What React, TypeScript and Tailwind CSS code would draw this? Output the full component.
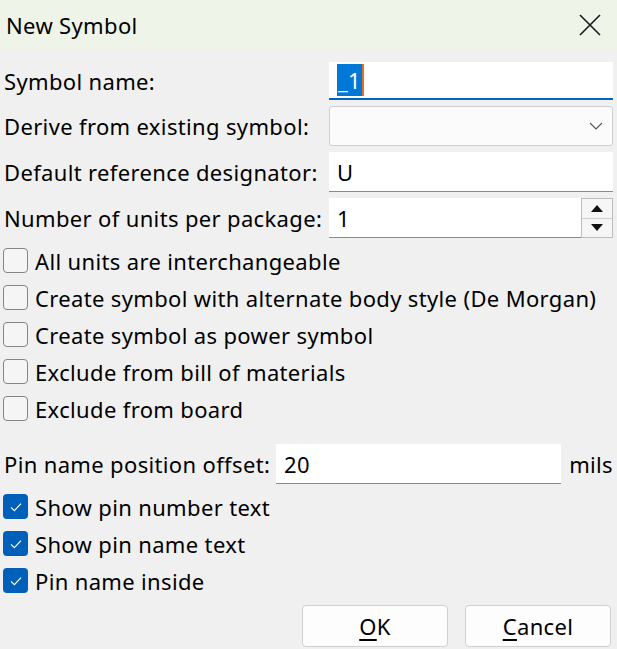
import { useState } from "react";

const font = { fontFamily: '"Noto Sans", "Open Sans", sans-serif' };

const Check = ({ checked, label }: { checked: boolean; label: string }) => {
  return (
    <div className="flex items-center h-[37px]">
      {checked ? (
        <div className="w-[25px] h-[25px] ml-[3px] rounded-[4px] bg-[#005fb8] flex items-center justify-center">
          <svg width="16" height="16" viewBox="0 0 16 16">
            <path d="M3 8.4 L6.4 11.6 L13 4.6" stroke="white" strokeWidth="1.2" fill="none" />
          </svg>
        </div>
      ) : (
        <div className="w-[25px] h-[25px] ml-[3px] rounded-[4px] border border-[#858585] bg-[#f5f5f5]" />
      )}
      <span className="ml-[7px]">{label}</span>
    </div>
  );
};

export default function App() {
  const [name] = useState("_1");

  return (
    <div className="w-[617px] h-[649px] overflow-hidden bg-[#f0f0f0] text-[22px] tracking-[0.35px] text-black leading-none" style={font}>
      {/* title bar */}
      <div className="h-[50px] bg-[#eef4e8] flex items-center justify-between pl-[6px] pr-[16px]">
        <span>New Symbol</span>
        <svg width="22" height="22" viewBox="0 0 22 22">
          <path d="M1 1 L21 21 M21 1 L1 21" stroke="#1a1a1a" strokeWidth="1.6" />
        </svg>
      </div>

      <div className="pl-[4px] pr-[4px]">
        {/* top fields */}
        <div className="grid grid-cols-[325px_284px] gap-y-[6px] mt-[12px]">
          <div className="flex items-center">Symbol name:</div>
          <div className="h-[38px] bg-white border-b-2 border-[#0067c0] flex items-center pl-[8px]">
            <span className="bg-[#0078d7] text-white h-[32px] flex items-center px-[1px] border-r-2 border-[#e07020]">{name}</span>
          </div>

          <div className="flex items-center">Derive from existing symbol:</div>
          <div className="h-[40px] bg-[#fbfbfb] border border-[#cfcfcf] rounded-[3px] flex items-center justify-end pr-[9px]">
            <svg width="14" height="8" viewBox="0 0 14 8">
              <path d="M1 1 L7 7 L13 1" stroke="#555" strokeWidth="1.1" fill="none" />
            </svg>
          </div>

          <div className="flex items-center">Default reference designator:</div>
          <div className="h-[40px] bg-white border-b border-[#8a8a8a] flex items-center pl-[8px]">U</div>

          <div className="flex items-center">Number of units per package:</div>
          <div className="h-[40px] flex">
            <div className="flex-1 bg-white border-b border-[#8a8a8a] flex items-center pl-[8px]">1</div>
            <div className="w-[32px] flex flex-col border border-[#bdbdbd]">
              <div className="flex-1 bg-[#f6f6f6] border-b border-[#cfcfcf] flex items-center justify-center">
                <svg width="12" height="7" viewBox="0 0 12 7"><path d="M0 7 L6 0 L12 7 Z" fill="#111" /></svg>
              </div>
              <div className="flex-1 bg-[#f6f6f6] flex items-center justify-center">
                <svg width="12" height="7" viewBox="0 0 12 7"><path d="M0 0 L6 7 L12 0 Z" fill="#111" /></svg>
              </div>
            </div>
          </div>
        </div>

        {/* options */}
        <div className="mt-[4px] -ml-[4px]">
          <Check checked={false} label="All units are interchangeable" />
          <Check checked={false} label="Create symbol with alternate body style (De Morgan)" />
          <Check checked={false} label="Create symbol as power symbol" />
          <Check checked={false} label="Exclude from bill of materials" />
          <Check checked={false} label="Exclude from board" />
        </div>

        {/* pin name offset */}
        <div className="flex items-center mt-[17px] h-[40px]">
          <span className="w-[273px]">Pin name position offset:</span>
          <div className="w-[286px] h-[40px] bg-white border-b border-[#8a8a8a] flex items-center pl-[8px]">20</div>
          <span className="ml-[8px]">mils</span>
        </div>

        <div className="mt-[4px] -ml-[4px]">
          <Check checked={true} label="Show pin number text" />
          <Check checked={true} label="Show pin name text" />
          <Check checked={true} label="Pin name inside" />
        </div>

        {/* buttons */}
        <div className="flex justify-end gap-[17px] mt-[6px] pr-[2px]">
          <button className="w-[146px] h-[42px] bg-[#fdfdfd] border border-[#d0d0d0] rounded-[4px] flex items-center justify-center">
            <span><span className="underline underline-offset-4">O</span>K</span>
          </button>
          <button className="w-[146px] h-[42px] bg-[#fdfdfd] border border-[#d0d0d0] rounded-[4px] flex items-center justify-center">
            <span><span className="underline underline-offset-4">C</span>ancel</span>
          </button>
        </div>
      </div>
    </div>
  );
}
